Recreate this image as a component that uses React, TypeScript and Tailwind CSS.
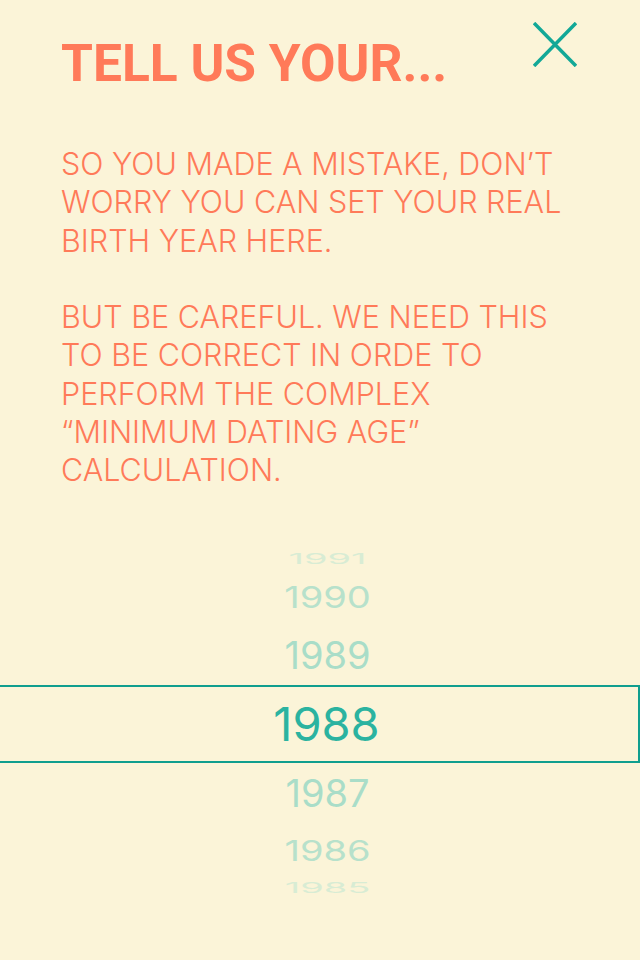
import React from 'react';

const years = [
  { y: 1991, h: 'h-[38px]', cls: 'text-[38px] scale-y-[0.37] text-[#d8ecd4]', pad: '' },
  { y: 1990, h: 'h-[38px]', cls: 'text-[38px] scale-y-[0.78] text-[#b7e1cb]', pad: '' },
  { y: 1989, h: 'h-[69px]', cls: 'text-[38px] text-[#a9ddc8]', pad: 'pt-[9px]' },
];

const after = [
  { y: 1987, h: 'h-[60px]', cls: 'text-[38px] text-[#a9ddc8]', pad: '' },
  { y: 1986, h: 'h-[56px]', cls: 'text-[38px] scale-y-[0.74] text-[#b7e1cb]', pad: '' },
  { y: 1985, h: 'h-[18px]', cls: 'text-[38px] scale-y-[0.37] text-[#d8ecd4]', pad: '' },
];

const YearRow: React.FC<{ y: number; h: string; cls: string; pad: string }> = ({ y, h, cls, pad }) => (
  <div className={`flex items-center justify-center pl-[15px] ${h} ${pad}`}>
    <span className={`leading-none ${cls}`}>{y}</span>
  </div>
);

export default function App() {
  return (
    <div className="w-[640px] h-[960px] overflow-hidden bg-[#fbf4d8] font-['Inter',sans-serif]">
      <div className="flex items-start justify-between pl-[61px] pr-[63px] pt-[22px]">
        <h1 className="mt-[12px] font-['Roboto',sans-serif] text-[51.5px] font-bold leading-[60px] text-[#ff7a59]">
          TELL US YOUR...
        </h1>
        <svg width="44" height="45" viewBox="0 0 44 45" className="shrink-0">
          <path d="M1 1 L43 44 M43 1 L1 44" stroke="#12a897" strokeWidth="3.5" />
        </svg>
      </div>

      <div className="mt-[51px] pl-[61px] pr-[50px] text-[30.5px] font-light leading-[38.3px] text-[#ff7a59]">
        <p>SO YOU MADE A MISTAKE, DON’T WORRY YOU CAN SET YOUR REAL BIRTH YEAR HERE.</p>
        <p className="mt-[38.3px]">
          BUT BE CAREFUL. WE NEED THIS TO BE CORRECT IN ORDE TO PERFORM THE COMPLEX “MINIMUM DATING AGE” CALCULATION.
        </p>
      </div>

      <div className="mt-[50px] flex flex-col">
        {years.map((r) => (
          <YearRow key={r.y} {...r} />
        ))}
        <div className="flex h-[78px] items-center justify-center border-y-2 border-r-2 border-[#0f9e8e] pl-[15px]">
          <span className="text-[47px] leading-none text-[#2bb3a0]">1988</span>
        </div>
        {after.map((r) => (
          <YearRow key={r.y} {...r} />
        ))}
      </div>
    </div>
  );
}
